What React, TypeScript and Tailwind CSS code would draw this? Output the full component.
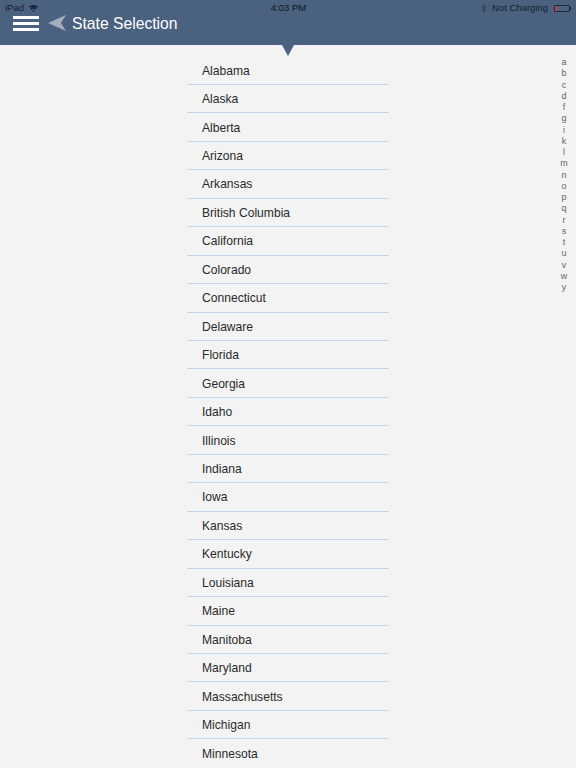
const states = [
  "Alabama",
  "Alaska",
  "Alberta",
  "Arizona",
  "Arkansas",
  "British Columbia",
  "California",
  "Colorado",
  "Connecticut",
  "Delaware",
  "Florida",
  "Georgia",
  "Idaho",
  "Illinois",
  "Indiana",
  "Iowa",
  "Kansas",
  "Kentucky",
  "Louisiana",
  "Maine",
  "Manitoba",
  "Maryland",
  "Massachusetts",
  "Michigan",
  "Minnesota",
];

const letters = "abcdfgiklmnopqrstuvwy".split("");

export default function App() {
  return (
    <div className="h-[768px] w-[576px] overflow-hidden bg-[#f3f3f3] font-['Liberation_Sans',sans-serif] antialiased">
      <div className="relative z-10 h-[45px] bg-[#4a617f]">
        <div className="flex h-[15px] items-center pl-[5px] pr-[5px] pt-[1px] text-[9.5px] leading-none text-[#16212f]">
          <div className="flex flex-1 items-center gap-[5px]">
            <span>iPad</span>
            <svg width="9" height="7" viewBox="0 0 9 7" fill="none" stroke="#0d1622" strokeWidth="1.3">
              <path d="M0.5 2.4a5.7 5.7 0 0 1 8 0" />
              <path d="M2 4a3.6 3.6 0 0 1 5 0" />
              <path d="M3.4 5.5a1.5 1.5 0 0 1 2.2 0L4.5 6.8Z" fill="#0d1622" stroke="none" />
            </svg>
          </div>
          <span className="ml-[1px] text-[#0d1622]">4:03 PM</span>
          <div className="flex flex-1 items-center justify-end">
            <svg className="mr-[5px]" width="6" height="9" viewBox="0 0 6 11" fill="none" stroke="#2c3b50" strokeWidth="1">
              <path d="M0.5 3l5 5-2.5 2.5v-10l2.5 2.5-5 5" />
            </svg>
            <span className="mr-[6px]">Not Charging</span>
            <div className="flex items-center">
              <div className="flex h-[7px] w-[16px] rounded-[1px] border border-[#1d2a3c]">
                <div className="h-full w-[2px] bg-[#d8343c]" />
              </div>
              <div className="h-[3px] w-[1px] bg-[#1d2a3c]" />
            </div>
          </div>
        </div>
        <div className="flex items-center pl-[13px]">
          <div className="flex w-[26px] flex-col gap-[3px]">
            <div className="h-[3px] bg-white" />
            <div className="h-[3px] bg-white" />
            <div className="h-[3px] bg-white" />
          </div>
          <svg className="ml-[9px]" width="18" height="16" viewBox="0 0 18 16">
            <path d="M0 8L18 0L13 8L18 16Z" fill="#a3adbc" />
          </svg>
          <span className="ml-[6px] pt-[1px] text-[15.7px] leading-none text-white">State Selection</span>
        </div>
        <div className="absolute left-[282px] top-[45px] size-0 border-x-[6.5px] border-t-[11px] border-x-transparent border-t-[#4a617f]" />
      </div>
      <div className="relative">
        <ul className="mx-auto w-[202px] pt-[11.5px]">
          {states.map((state) => (
            <li
              key={state}
              className="flex h-[28.46px] items-center border-b border-[#c4d4ea] pl-[15px] pt-[1px] text-[12.1px] text-[#2a2a2a] last:border-b-0"
            >
              {state}
            </li>
          ))}
        </ul>
        <div className="absolute right-[8px] top-[12px] flex w-[8px] flex-col items-center text-[9px] text-[#666]">
          {letters.map((l) => (
            <span key={l} className="h-[11.25px] leading-[11.25px]">
              {l}
            </span>
          ))}
        </div>
      </div>
    </div>
  );
}
